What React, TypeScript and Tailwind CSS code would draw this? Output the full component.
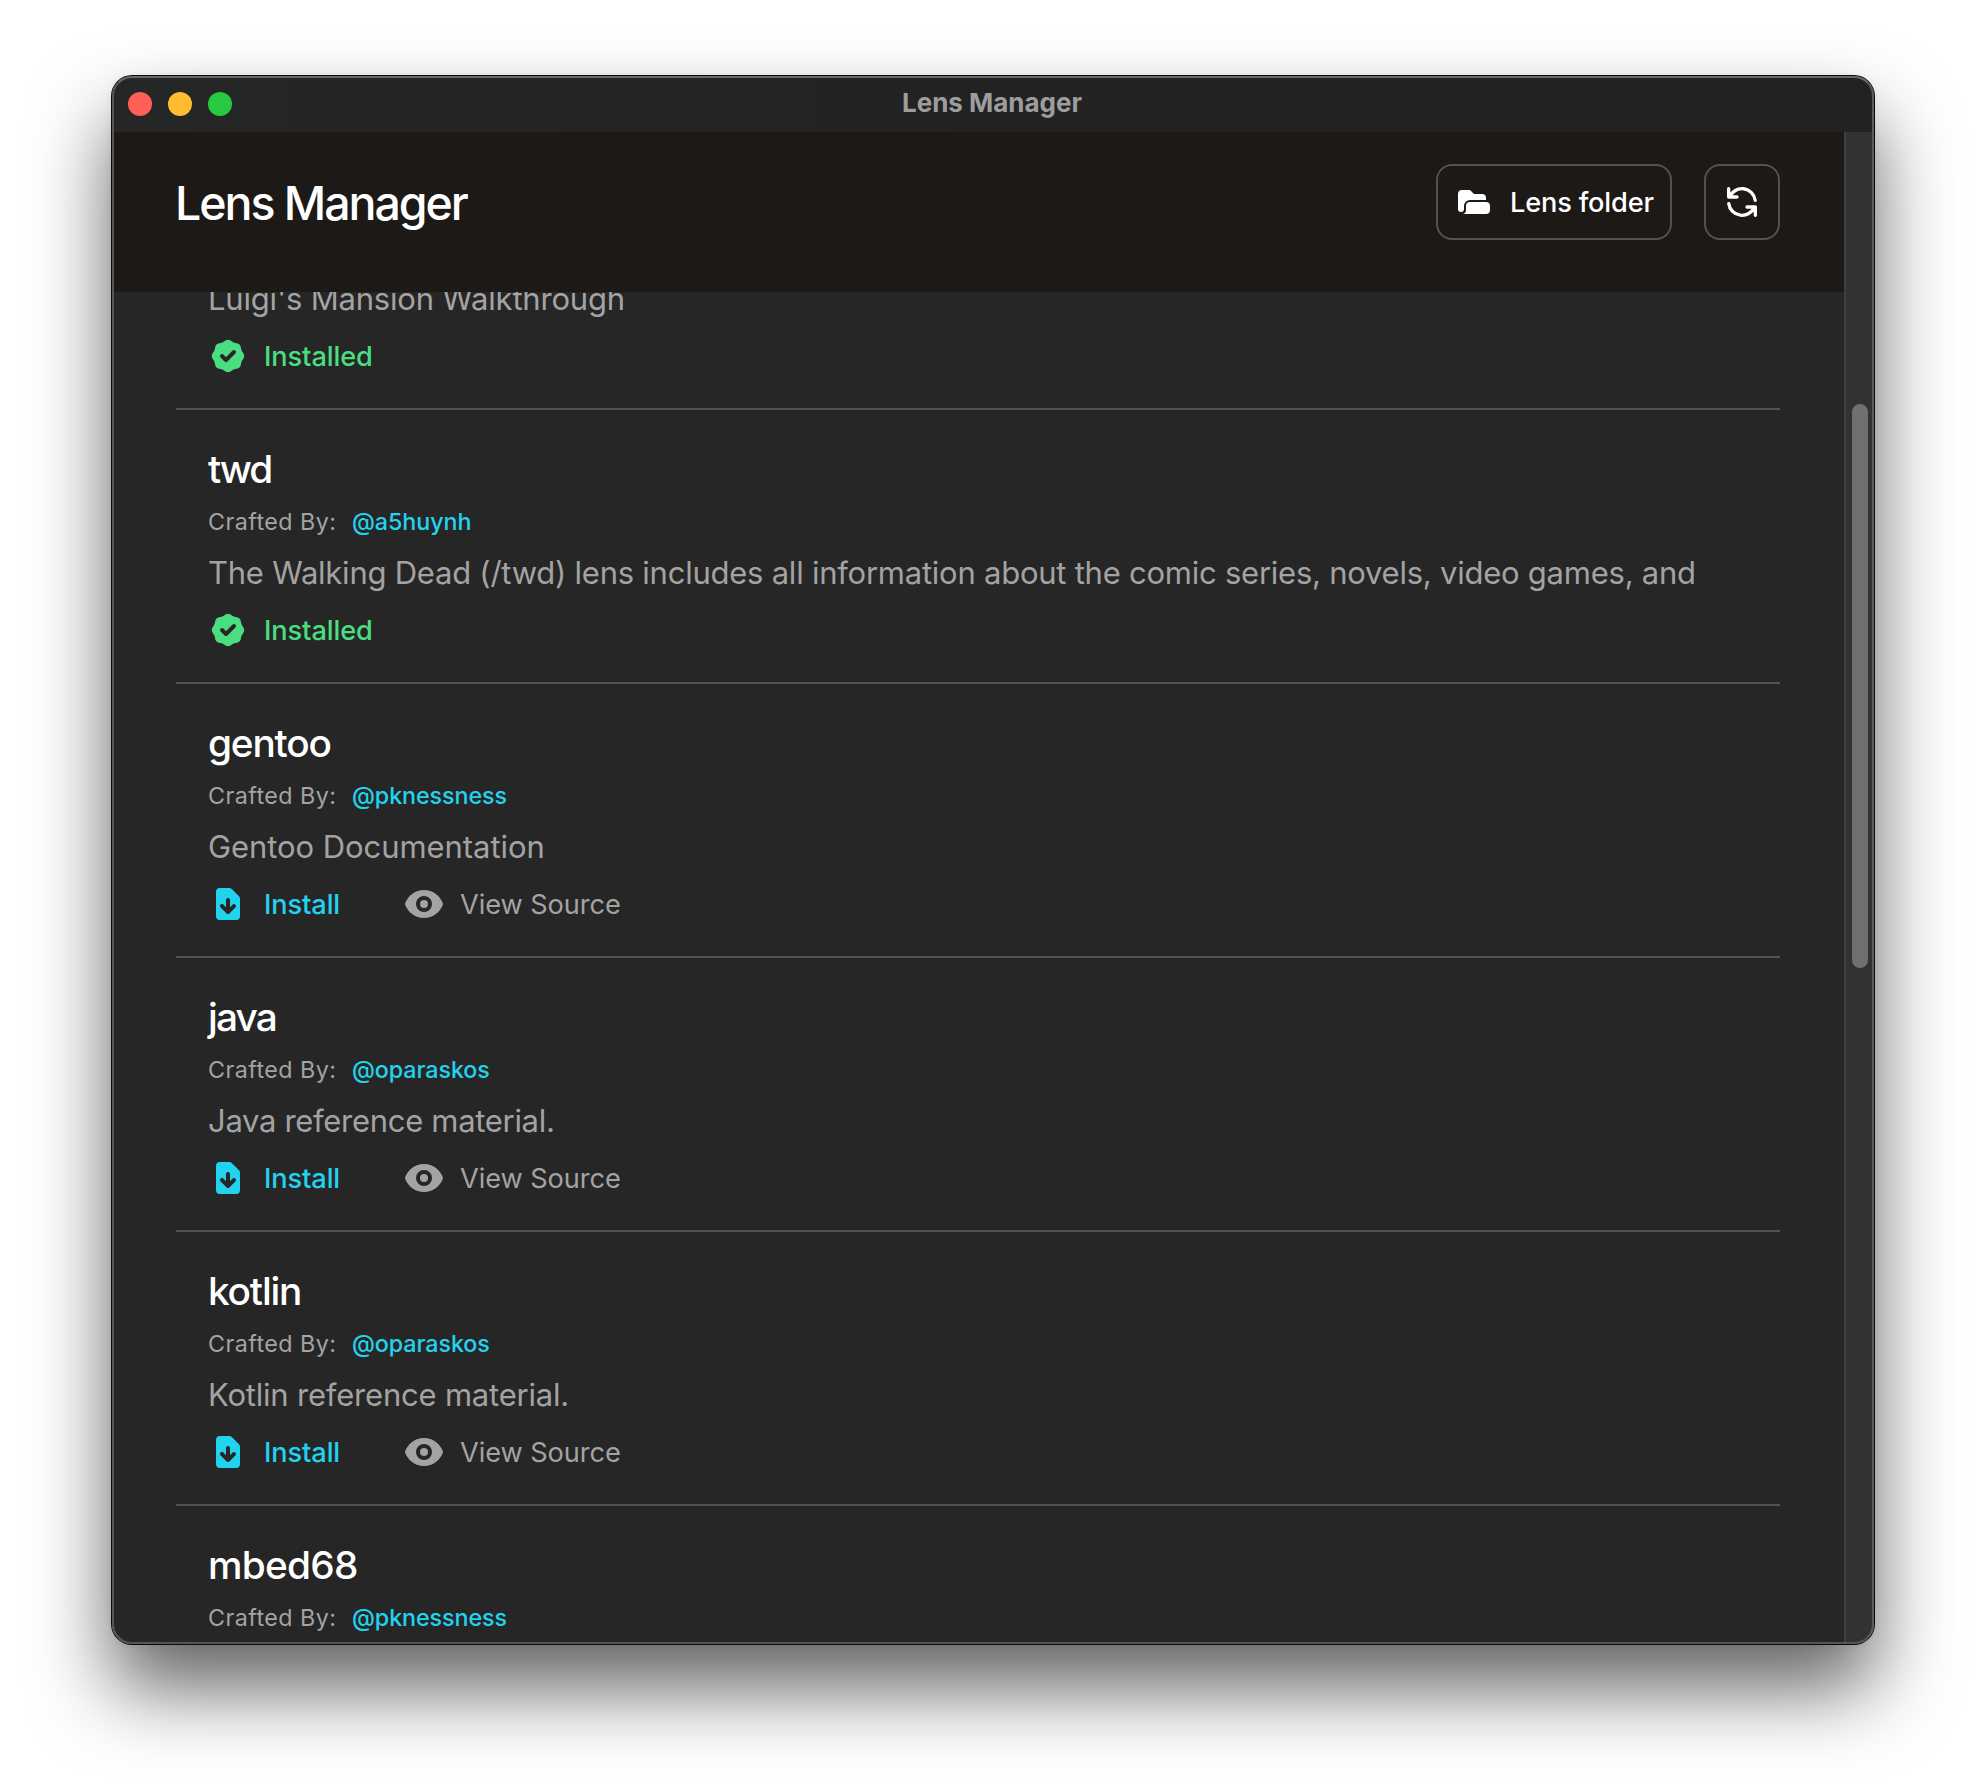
import { HiBadgeCheck, HiDocumentDownload, HiEye, HiFolderOpen, HiOutlineRefresh } from "react-icons/hi";

type Lens = {
  name?: string;
  nameTracking?: string;
  author?: string;
  description?: string;
  tracking?: string;
  installed?: boolean;
};

const lenses: Lens[] = [
  { description: "Luigi's Mansion Walkthrough", tracking: "tracking-[-0.2px]", installed: true },
  {
    name: "twd",
    nameTracking: "tracking-[-2px]",
    author: "@a5huynh",
    description:
      "The Walking Dead (/twd) lens includes all information about the comic series, novels, video games, and",
    tracking: "tracking-[-0.24px]",
    installed: true,
  },
  {
    name: "gentoo",
    nameTracking: "tracking-[-1.2px]",
    author: "@pknessness",
    description: "Gentoo Documentation",
    tracking: "tracking-[-0.07px]",
  },
  {
    name: "java",
    nameTracking: "tracking-[-1.8px]",
    author: "@oparaskos",
    description: "Java reference material.",
    tracking: "tracking-[-0.31px]",
  },
  {
    name: "kotlin",
    nameTracking: "tracking-[-1.2px]",
    author: "@oparaskos",
    description: "Kotlin reference material.",
    tracking: "tracking-[-0.2px]",
  },
  { name: "mbed68", nameTracking: "tracking-[-0.75px]", author: "@pknessness" },
];

function LensRow({ lens }: { lens: Lens }) {
  return (
    <div className="flex flex-col border-b-2 border-[#525252] px-8 pb-8">
      {lens.name && (
        <>
          <h2 className={`mt-[31px] h-14 text-[38.8px] leading-[56px] font-medium text-white ${lens.nameTracking}`}>
            {lens.name}
          </h2>
          <div className="mt-[9px] flex h-8 text-[23.3px] leading-8">
            <span className="w-36 font-normal tracking-[0.45px] text-[#a3a3a3]">Crafted By:</span>
            <a className="tracking-[-0.08px] text-[#22d3ee]">{lens.author}</a>
          </div>
        </>
      )}
      {lens.description && (
        <>
          <p
            className={`mt-[11px] h-12 text-[31px] leading-[48px] font-normal whitespace-nowrap text-[#a3a3a3] ${lens.tracking}`}
          >
            {lens.description}
          </p>
          <div className="mt-[13px] flex h-10 items-center text-[27.2px]">
            {lens.installed ? (
              <div className="flex items-center gap-4 tracking-[-0.1px] text-[#4ade80]">
                <HiBadgeCheck className="size-10" />
                <span className="pt-0.5">Installed</span>
              </div>
            ) : (
              <>
                <a className="flex w-[196px] items-center gap-4 tracking-[-0.12px] text-[#22d3ee]">
                  <HiDocumentDownload className="size-10" />
                  <span className="pt-0.5">Install</span>
                </a>
                <a className="flex items-center gap-4 font-normal tracking-[-0.08px] text-[#a3a3a3]">
                  <HiEye className="size-10" />
                  <span className="pt-0.5">View Source</span>
                </a>
              </>
            )}
          </div>
        </>
      )}
    </div>
  );
}

export default function App() {
  return (
    <div className="h-[1792px] w-[1986px] overflow-hidden bg-white px-28 pt-[76px] font-['Inter',sans-serif] font-medium">
      <div className="relative h-[1568px] w-[1762px] rounded-[20px] shadow-[0_0_0_1px_#0a0a0a,0_0_8px_rgba(0,0,0,0.06),0_44px_80px_rgba(0,0,0,0.62)]">
        <div className="flex h-full flex-col overflow-hidden rounded-[20px] bg-[#262626]">
          <div className="grid h-14 shrink-0 grid-cols-[1fr_auto_1fr] items-center bg-linear-to-r from-[#242726] via-[#222222] to-[#222222] px-4">
            <div className="flex gap-4">
              <span className="size-6 rounded-full bg-[#ff5f57]" />
              <span className="size-6 rounded-full bg-[#febc2e]" />
              <span className="size-6 rounded-full bg-[#28c840]" />
            </div>
            <div className="pr-0.5 pb-[3px] text-[26px] leading-8 font-bold tracking-[-0.02px] text-[#9d9d9d]">
              Lens Manager
            </div>
          </div>
          <div className="flex min-h-0 flex-1">
            <main className="flex min-w-0 flex-1 flex-col">
              <header className="flex h-40 shrink-0 items-start bg-[#1c1917] pt-8 pr-16 pl-[63px]">
                <h1 className="mt-px flex-1 text-[46.5px] leading-[76px] tracking-[-2.05px] text-white">
                  Lens Manager
                </h1>
                <button className="flex h-[76px] w-[236px] items-center gap-4 rounded-2xl border-2 border-[#525252] pl-4 text-[27.2px] tracking-[-0.18px] whitespace-nowrap text-white">
                  <HiFolderOpen className="size-10 shrink-0" />
                  <span className="pt-0.5">Lens folder</span>
                </button>
                <button className="ml-8 flex size-[76px] items-center justify-center rounded-2xl border-2 border-[#525252] text-white">
                  <HiOutlineRefresh className="size-10" />
                </button>
              </header>
              <div className="min-h-0 flex-1 overflow-hidden px-16">
                <div className="-mt-7">
                  {lenses.map((lens, i) => (
                    <LensRow key={i} lens={lens} />
                  ))}
                </div>
              </div>
            </main>
            <div className="w-[30px] shrink-0 border-l-2 border-[#3f3f3f] bg-[#323232] pt-[272px] pl-1.5">
              <div className="h-[564px] w-4 rounded-full bg-[#707070]" />
            </div>
          </div>
        </div>
        <div className="pointer-events-none absolute inset-0 rounded-[20px] border-2 border-t-[#686868] border-r-[#5c5c5c] border-b-[#555555] border-l-[#555555]" />
      </div>
    </div>
  );
}
